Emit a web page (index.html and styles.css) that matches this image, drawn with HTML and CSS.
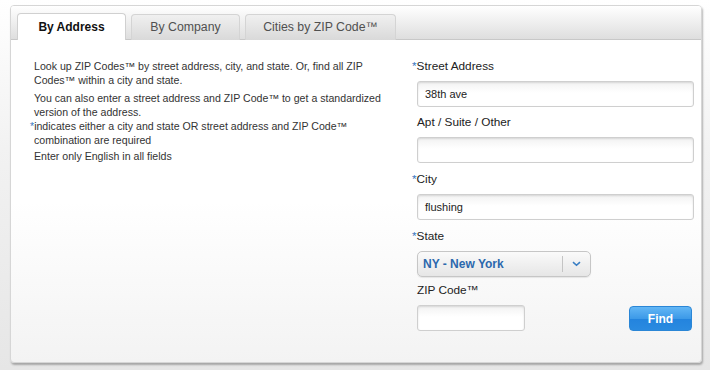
FILE: index.html
```html
<!DOCTYPE html>
<html>
<head>
<meta charset="utf-8">
<link rel="stylesheet" href="styles.css">
</head>
<body>
<div class="panel">
  <div class="tabbar">
    <div class="tab active">By Address</div>
    <div class="tab">By Company</div>
    <div class="tab wide">Cities by ZIP Code™</div>
  </div>
  <div class="content">
    <div class="info">
      <p class="p1">Look up ZIP Codes™ by street address, city, and state. Or, find all ZIP Codes™ within a city and state.</p>
      <p class="p2">You can also enter a street address and ZIP Code™ to get a standardized version of the address.</p>
      <p class="p3 req"><span class="star">*</span>indicates either a city and state OR street address and ZIP Code™ combination are required</p>
      <p class="p4">Enter only English in all fields</p>
    </div>
    <div class="form">
      <div class="field f1">
        <div class="label req"><span class="star">*</span>Street Address</div>
        <div class="input">38th ave</div>
      </div>
      <div class="field f2">
        <div class="label">Apt / Suite / Other</div>
        <div class="input"></div>
      </div>
      <div class="field f3">
        <div class="label req"><span class="star">*</span>City</div>
        <div class="input">flushing</div>
      </div>
      <div class="field f4">
        <div class="label req"><span class="star">*</span>State</div>
        <div class="select">
          <span class="sel-text">NY - New York</span>
          <span class="sel-arrow">
            <svg width="9" height="6" viewBox="0 0 9 6"><path d="M1 1.2 L4.5 4.3 L8 1.2" fill="none" stroke="#3a7fc4" stroke-width="1.6"/></svg>
          </span>
        </div>
      </div>
      <div class="field f5">
        <div class="label">ZIP Code™</div>
        <div class="ziprow">
          <div class="input zip"></div>
          <div class="btn">Find</div>
        </div>
      </div>
    </div>
  </div>
</div>
</body>
</html>
```
FILE: styles.css
```css
html, body {
  margin: 0;
  padding: 0;
}
body {
  width: 710px;
  height: 370px;
  background: linear-gradient(#ffffff 0%, #f2f2f2 40%, #e6e6e6 100%);
  font-family: "Liberation Sans", Arial, sans-serif;
  color: #333;
  overflow: hidden;
}
.panel {
  margin: 5px 0 0 10px;
  width: 690px;
  height: 356px;
  border: 1px solid #d6d6d6;
  border-radius: 4px;
  background: linear-gradient(#ffffff 0%, #ffffff 55%, #f3f3f3 100%);
  box-shadow: 1px 2px 2px rgba(0, 0, 0, 0.28);
  display: flex;
  flex-direction: column;
  overflow: hidden;
}
.tabbar {
  height: 33px;
  background: linear-gradient(#ffffff 0%, #dedede 100%);
  border-bottom: 1px solid #c8c8c8;
  display: flex;
  align-items: flex-end;
  gap: 5px;
  padding-left: 6px;
}
.tab {
  width: 109px;
  height: 26px;
  margin-bottom: -1px;
  box-sizing: border-box;
  border: 1px solid #d4d4d4;
  border-bottom: none;
  border-radius: 4px 4px 0 0;
  background: linear-gradient(#f0f0f0 0%, #d9d9d9 100%);
  font-size: 12.3px;
  color: #505050;
  display: flex;
  align-items: center;
  justify-content: center;
  padding-bottom: 1px;
}
.tab.wide {
  width: 151px;
}
.tab.active {
  height: 27px;
  background: #ffffff;
  border-color: #d0d0d0;
  color: #111;
  font-weight: bold;
  font-size: 12px;
}
.content {
  flex: 1;
  display: flex;
}
.info {
  width: 350px;
  padding: 20px 0 0 23px;
  font-size: 10.6px;
  line-height: 13.5px;
  color: #333;
}
.info p {
  margin: 0;
}
.p1 { margin-bottom: 5px !important; }
.p2 { margin-bottom: 1px !important; }
.p3 { margin-bottom: 3px !important; }
.req {
  text-indent: -4px;
}
.star {
  color: #3a78bf;
}
.form {
  margin-left: 28px;
  padding-top: 18px;
  width: 282px;
}
.field {
  margin-bottom: 8px;
}
.field.f1 { margin-bottom: 7px; }
.field.f4 { margin-bottom: 5px; }
.label {
  font-size: 11.8px;
  line-height: 16px;
  color: #222;
  margin-left: 5px;
  margin-bottom: 7px;
}
.label.req {
  text-indent: -5px;
}
.input {
  margin-left: 5px;
  width: 277px;
  height: 26px;
  box-sizing: border-box;
  border: 1px solid #cfcfcf;
  border-radius: 3px;
  background: linear-gradient(#f2f2f2 0%, #ffffff 45%);
  box-shadow: inset 0 1px 2px rgba(0, 0, 0, 0.12);
  font-size: 11px;
  color: #222;
  padding-left: 7px;
  display: flex;
  align-items: center;
}
.select {
  margin-left: 5px;
  width: 174px;
  height: 26px;
  box-sizing: border-box;
  border: 1px solid #c6c6c6;
  border-radius: 5px;
  background: linear-gradient(#fafafa 0%, #e6e6e6 100%);
  box-shadow: 0 1px 1px rgba(0, 0, 0, 0.08);
  display: flex;
  align-items: center;
}
.sel-text {
  flex: 1;
  padding-left: 5px;
  font-size: 12px;
  font-weight: bold;
  color: #2b68ad;
}
.sel-arrow {
  width: 27px;
  height: 16px;
  border-left: 1px solid #c4c4c4;
  display: flex;
  align-items: center;
  justify-content: center;
}
.ziprow {
  display: flex;
  align-items: flex-start;
  justify-content: space-between;
}
.input.zip {
  width: 108px;
}
.btn {
  width: 63px;
  height: 25px;
  margin-top: 1px;
  margin-right: 2px;
  box-sizing: border-box;
  border: 1px solid #2a86d6;
  border-radius: 4px;
  background: linear-gradient(#62b6f5 0%, #3d9ae8 50%, #2384de 52%, #2a8ae0 100%);
  color: #fff;
  font-size: 12px;
  font-weight: bold;
  display: flex;
  align-items: center;
  justify-content: center;
}
```
